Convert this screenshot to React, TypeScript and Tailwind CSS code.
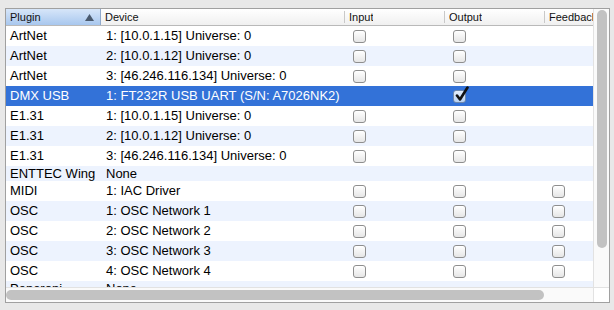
import React from "react";

type Row = {
    plugin: string;
    device: string;
    input?: boolean;
    output?: boolean;
    feedback?: boolean;
    checked?: boolean;
    short?: boolean;
};

const rows: Row[] = [
    { plugin: "ArtNet", device: "1: [10.0.1.15] Universe: 0", input: true, output: true },
    { plugin: "ArtNet", device: "2: [10.0.1.12] Universe: 0", input: true, output: true },
    { plugin: "ArtNet", device: "3: [46.246.116.134] Universe: 0", input: true, output: true },
    { plugin: "DMX USB", device: "1: FT232R USB UART (S/N: A7026NK2)", output: true, checked: true },
    { plugin: "E1.31", device: "1: [10.0.1.15] Universe: 0", input: true, output: true },
    { plugin: "E1.31", device: "2: [10.0.1.12] Universe: 0", input: true, output: true },
    { plugin: "E1.31", device: "3: [46.246.116.134] Universe: 0", input: true, output: true },
    { plugin: "ENTTEC Wing", device: "None", short: true },
    { plugin: "MIDI", device: "1: IAC Driver", input: true, output: true, feedback: true },
    { plugin: "OSC", device: "1: OSC Network 1", input: true, output: true, feedback: true },
    { plugin: "OSC", device: "2: OSC Network 2", input: true, output: true, feedback: true },
    { plugin: "OSC", device: "3: OSC Network 3", input: true, output: true, feedback: true },
    { plugin: "OSC", device: "4: OSC Network 4", input: true, output: true, feedback: true },
    { plugin: "Peperoni", device: "None", short: true },
];

function Checkbox({ checked }: { checked?: boolean }) {
    if (checked) {
        return (
            <div className="relative w-[13px] h-[13px] rounded-[3px] border border-[#6f89ad] bg-gradient-to-b from-[#e4eefb] to-[#b9d2f2]">
                <svg className="absolute left-[1px] top-[-5px]" width="14" height="16" viewBox="0 0 14 16">
                    <path d="M2 9.5 L5 13.5 L12.5 1.5" fill="none" stroke="#111" strokeWidth="2.6" strokeLinecap="round" strokeLinejoin="round" />
                </svg>
            </div>
        );
    }
    return (
        <div className="w-[13px] h-[13px] rounded-[3px] border border-[#8e8e8e] bg-gradient-to-b from-[#ffffff] to-[#e6e6e6] shadow-[inset_0_1px_0_#ffffff]" />
    );
}

function HeaderCell({ label, width, active }: { label: string; width: string; active?: boolean }) {
    return (
        <div
            className={`${width} shrink-0 h-full flex items-center pl-[4px] ${
                active ? "bg-gradient-to-b from-[#d7e6f9] to-[#a8c7ee] border-r border-[#8fa9cc]" : ""
            }`}
        >
            <span className="truncate">{label}</span>
            {active ? (
                <svg className="ml-auto mr-[6px]" width="9" height="7" viewBox="0 0 9 7">
                    <path d="M4.5 0 L9 7 L0 7 Z" fill="#4a5a6e" />
                </svg>
            ) : (
                <span className="ml-auto w-px h-[12px] bg-[#c9c9c9]" />
            )}
        </div>
    );
}

export default function App() {
    return (
        <div className="w-[614px] h-[310px] bg-[#e8e8e8] pt-[8px] pl-[5px] overflow-hidden" style={{ fontFamily: '"Liberation Sans", Arial, sans-serif' }}>
            <div className="w-[605px] h-[295px] border border-[#a0a0a0] bg-white flex flex-col">
                <div className="flex h-[278px]">
                    {/* table */}
                    <div className="w-[587px] overflow-hidden flex flex-col">
                        <div className="h-[17px] shrink-0 flex border-b border-[#b9b9b9] bg-gradient-to-b from-[#ffffff] to-[#f0f0f0] text-[11px] text-[#111]">
                            <HeaderCell label="Plugin" width="w-[95px]" active />
                            <HeaderCell label="Device" width="w-[244px]" />
                            <HeaderCell label="Input" width="w-[100px]" />
                            <HeaderCell label="Output" width="w-[100px]" />
                            <HeaderCell label="Feedback" width="w-[100px]" />
                        </div>
                        {rows.map((r, i) => {
                            const bg = r.checked ? "bg-[#3372d8] text-white" : i % 2 === 1 ? "bg-[#edf3fe] text-black" : "bg-white text-black";
                            return (
                                <div key={i} className={`flex shrink-0 items-center text-[13px] ${r.short ? "h-[15px]" : "h-[20px]"} ${bg}`}>
                                    <div className="w-[95px] shrink-0 pl-[4px] whitespace-nowrap">{r.plugin}</div>
                                    <div className="w-[244px] shrink-0 pl-[5px] whitespace-nowrap">{r.device}</div>
                                    <div className="w-[100px] shrink-0 pl-[8px] flex">{r.input && <Checkbox />}</div>
                                    <div className="w-[100px] shrink-0 pl-[8px] flex">{r.output && <Checkbox checked={r.checked} />}</div>
                                    <div className="w-[100px] shrink-0 pl-[7px] flex">{r.feedback && <Checkbox />}</div>
                                </div>
                            );
                        })}
                    </div>
                    {/* vertical scrollbar */}
                    <div className="w-[16px] border-l border-[#e2e2e2] bg-[#fafafa] pt-[1px] pl-[3px]">
                        <div className="w-[10px] h-[238px] rounded-full bg-[#c2c2c2]" />
                    </div>
                </div>
                {/* horizontal scrollbar */}
                <div className="flex h-[15px] border-t border-[#e2e2e2]">
                    <div className="w-[587px] bg-[#fafafa] pt-[2px]">
                        <div className="w-[538px] h-[10px] rounded-full bg-[#c2c2c2]" />
                    </div>
                    <div className="w-[16px] border-l border-[#e2e2e2] bg-white" />
                </div>
            </div>
        </div>
    );
}
